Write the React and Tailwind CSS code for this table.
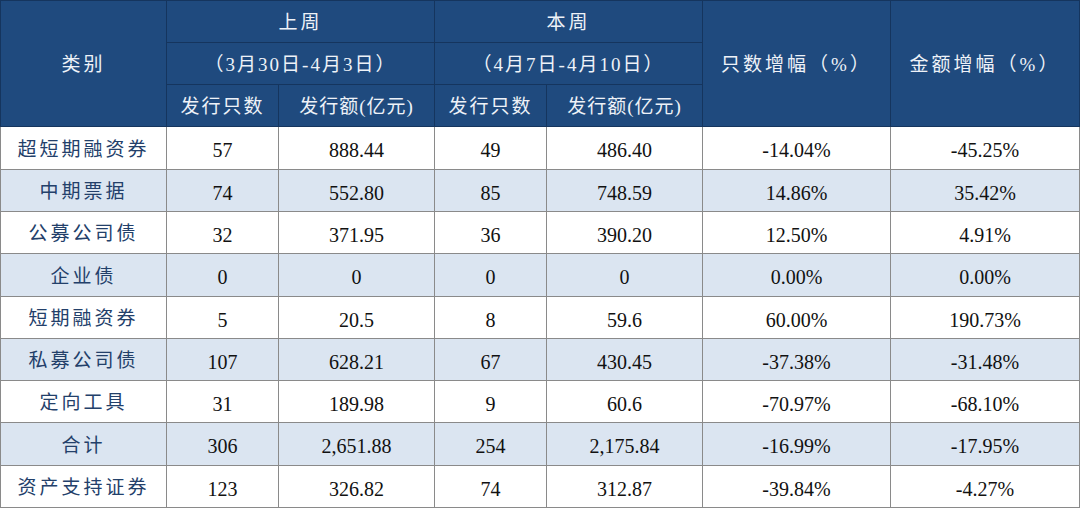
import React from "react";

const rows = [
  ["超短期融资券", "57", "888.44", "49", "486.40", "-14.04%", "-45.25%"],
  ["中期票据", "74", "552.80", "85", "748.59", "14.86%", "35.42%"],
  ["公募公司债", "32", "371.95", "36", "390.20", "12.50%", "4.91%"],
  ["企业债", "0", "0", "0", "0", "0.00%", "0.00%"],
  ["短期融资券", "5", "20.5", "8", "59.6", "60.00%", "190.73%"],
  ["私募公司债", "107", "628.21", "67", "430.45", "-37.38%", "-31.48%"],
  ["定向工具", "31", "189.98", "9", "60.6", "-70.97%", "-68.10%"],
  ["合计", "306", "2,651.88", "254", "2,175.84", "-16.99%", "-17.95%"],
  ["资产支持证券", "123", "326.82", "74", "312.87", "-39.84%", "-4.27%"],
];

const heights = ["h-[43px]", "h-[42px]", "h-[42px]", "h-[43px]", "h-[42px]", "h-[42px]", "h-[42px]", "h-[43px]", "h-[42px]"];

const font = "font-['Liberation_Serif','Noto_Sans_CJK_SC',serif]";

export default function App() {
  const th = "border border-[#15355e] bg-[#1f4a7e] text-[#eef2f8] font-normal text-[19px] text-center align-middle pt-[4px] p-0";
  const td = "border border-[#8a8a8a] text-center align-middle pt-[4px] p-0";

  return (
    <div className={`w-[1080px] h-[508px] bg-white ${font}`}>
      <table className="w-[1079px] table-fixed border-collapse">
        <colgroup>
          <col className="w-[166px]" />
          <col className="w-[112px]" />
          <col className="w-[156px]" />
          <col className="w-[112px]" />
          <col className="w-[156px]" />
          <col className="w-[188px]" />
          <col className="w-[189px]" />
        </colgroup>
        <thead>
          <tr className="h-[42px]">
            <th rowSpan={3} className={`${th} tracking-[3px]`}>类别</th>
            <th colSpan={2} className={`${th} tracking-[3px]`}>上周</th>
            <th colSpan={2} className={`${th} tracking-[3px]`}>本周</th>
            <th rowSpan={3} className={`${th} tracking-[3px]`}>只数增幅（%）</th>
            <th rowSpan={3} className={`${th} tracking-[3px]`}>金额增幅（%）</th>
          </tr>
          <tr className="h-[42px]">
            <th colSpan={2} className={`${th} tracking-[2px]`}>（3月30日-4月3日）</th>
            <th colSpan={2} className={`${th} tracking-[2px]`}>（4月7日-4月10日）</th>
          </tr>
          <tr className="h-[42px]">
            <th className={`${th} tracking-[2px]`}>发行只数</th>
            <th className={`${th} tracking-[1px]`}>发行额(亿元)</th>
            <th className={`${th} tracking-[2px]`}>发行只数</th>
            <th className={`${th} tracking-[1px]`}>发行额(亿元)</th>
          </tr>
        </thead>
        <tbody>
          {rows.map((r, i) => (
            <tr key={r[0]} className={`${heights[i]} ${i % 2 === 1 ? "bg-[#dbe5f1]" : "bg-white"}`}>
              <td className={`${td} text-[19px] text-[#23406a] tracking-[3px]`}>{r[0]}</td>
              {r.slice(1).map((v, j) => (
                <td key={j} className={`${td} text-[20px] text-[#111]`}>{v}</td>
              ))}
            </tr>
          ))}
        </tbody>
      </table>
    </div>
  );
}
